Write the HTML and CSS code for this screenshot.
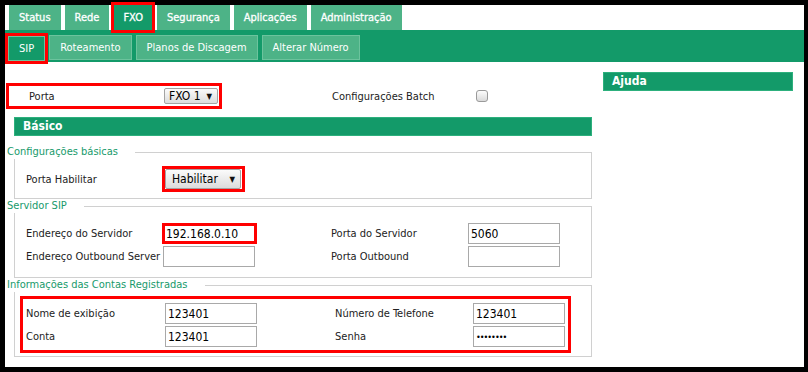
FILE: index.html
```html
<!DOCTYPE html>
<html lang="pt">
<head>
    <title>FXO - SIP</title>
    <meta charset="utf-8" />
    <link rel="stylesheet" href="styles.css">
</head>
<body>
<div class="frame">
    <div class="tabs">
        <a class="tab">Status</a>
        <a class="tab">Rede</a>
        <a class="tab on mark">FXO</a>
        <a class="tab">Segurança</a>
        <a class="tab">Aplicações</a>
        <a class="tab">Administração</a>
    </div>
    <div class="subbar">
        <a class="stab on mark">SIP</a>
        <a class="stab">Roteamento</a>
        <a class="stab">Planos de Discagem</a>
        <a class="stab">Alterar Número</a>
    </div>

    <div class="main">
        <div class="left">
            <div class="top">
                <div class="pbox">
                    <span class="plbl">Porta</span>
                    <span class="sel"><select class="s-fxo"><option>FXO 1</option></select></span>
                </div>
                <span class="blbl">Configurações Batch</span>
                <input class="chk" type="checkbox">
            </div>

            <div class="bar">Básico</div>

            <fieldset class="fs fs1">
                <legend>Configurações básicas</legend>
                <div class="row tall">
                    <span class="c1">Porta Habilitar</span>
                    <span class="redsel"><span class="sel"><select class="s-hab"><option>Habilitar</option></select></span></span>
                </div>
            </fieldset>

            <fieldset class="fs fs2">
                <legend>Servidor SIP</legend>
                <div class="row">
                    <span class="c1">Endereço do Servidor</span>
                    <span class="c2"><input class="inp red" type="text" value="192.168.0.10"></span>
                    <span class="c3">Porta do Servidor</span>
                    <input class="inp" type="text" value="5060">
                </div>
                <div class="row">
                    <span class="c1">Endereço Outbound Server</span>
                    <span class="c2"><input class="inp" type="text" value=""></span>
                    <span class="c3">Porta Outbound</span>
                    <input class="inp" type="text" value="">
                </div>
            </fieldset>

            <fieldset class="fs fs3">
                <legend>Informações das Contas Registradas</legend>
                <div class="acc">
                    <div class="row">
                        <span class="a1">Nome de exibição</span>
                        <span class="a2"><input class="inp" type="text" value="123401"></span>
                        <span class="a3">Número de Telefone</span>
                        <input class="inp" type="text" value="123401">
                    </div>
                    <div class="row">
                        <span class="a1">Conta</span>
                        <span class="a2"><input class="inp" type="text" value="123401"></span>
                        <span class="a3">Senha</span>
                        <input class="inp pwd" type="password" value="12345678">
                    </div>
                </div>
            </fieldset>
        </div>

        <div class="side">
            <div class="bar help">Ajuda</div>
        </div>
    </div>
</div>
</body>
</html>
```

FILE: styles.css
```css
body {
    margin: 0;
    background: #000;
    font-family: "DejaVu Sans Condensed", "DejaVu Sans", sans-serif;
    font-size: 11px;
    color: #222;
}

.frame {
    margin: 5px 4px 0 5px;
    height: 362px;
    background: #fff;
}

/* menu */
.tabs {
    display: flex;
    gap: 4px;
    padding-left: 4px;
    height: 25px;
}

.tab {
    display: flex;
    align-items: center;
    padding: 0 10px;
    background: #4db387;
    color: #fff;
    -webkit-text-stroke: 0.3px #fff;
}

.tab.on {
    background: #139a69;
    margin: 0 1px;
    padding: 0 9px;
}

.mark {
    outline: 3px solid #f00;
}

.subbar {
    display: flex;
    gap: 4px;
    height: 32px;
    box-sizing: border-box;
    padding: 5px 0 2px 3px;
    background: #139a69;
}

.stab {
    display: flex;
    align-items: center;
    padding: 0 10px;
    background: #4db387;
    border: 1px solid #6cc39d;
    color: #fff;
}

.stab.on {
    background: #139a69;
    margin-top: 1px;
    margin-bottom: -1px;
}

/* content */
.main {
    display: flex;
}

.left {
    width: 595px;
}

.side {
    width: 190px;
    margin: 10px 0 0 3px;
}

.top {
    display: flex;
    align-items: center;
    margin-top: 21px;
}

.pbox {
    display: flex;
    align-items: center;
    box-sizing: border-box;
    width: 216px;
    height: 26px;
    margin-left: 1px;
    padding-left: 20px;
    border: 3px solid #f00;
}

.plbl {
    width: 135px;
}

.blbl {
    width: 140px;
    margin-left: 110px;
}

.chk {
    appearance: none;
    -webkit-appearance: none;
    box-sizing: border-box;
    width: 12px;
    height: 12px;
    margin: 0 0 0 4px;
    border: 1px solid #9a9a9a;
    border-radius: 3px;
    background: linear-gradient(#fdfdfd, #dadada);
}

.bar {
    box-sizing: border-box;
    height: 19px;
    line-height: 17px;
    margin: 8px 0 0 9px;
    width: 578px;
    padding-left: 8px;
    background: #139a69;
    border: 1px solid #2db07d;
    color: #fff;
    font-weight: bold;
    font-size: 12px;
}

.bar.help {
    width: 190px;
    margin: 0;
}

/* selects */
.sel {
    position: relative;
    display: inline-block;
}

.sel::after {
    content: "▼";
    position: absolute;
    right: 6px;
    top: 50%;
    transform: translateY(-50%);
    font-size: 8px;
    color: #111;
    pointer-events: none;
}

.sel select {
    appearance: none;
    -webkit-appearance: none;
    display: block;
    box-sizing: border-box;
    font: inherit;
    color: #000;
    border: 1px solid #a3a3a3;
    border-radius: 2px;
    background: linear-gradient(#fbfbfb, #dcdcdc);
    padding: 0 0 0 4px;
}

.s-fxo {
    width: 54px;
    height: 16px;
    font-size: 12px !important;
    line-height: 14px;
}

.s-hab {
    width: 76px;
    height: 20px;
    font-size: 12px !important;
    padding-left: 6px !important;
}

.redsel {
    display: inline-block;
    border: 3px solid #f00;
    padding-right: 1px;
    margin-left: -1px;
}

/* fieldsets */
.fs {
    box-sizing: border-box;
    width: 578px;
    margin: 0 0 0 9px;
    padding: 0 0 0 11px;
    border: 1px solid #d0d0d0;
}

.fs legend {
    margin-left: -19px;
    padding: 0 17px 0 0;
    line-height: 14px;
    color: #179a6b;
    font-size: 11px;
}

.fs1 {
    margin-top: 9px;
    padding-top: 7px;
    padding-bottom: 6px;
}

.fs2 {
    padding-top: 9px;
    padding-bottom: 9px;
}

.fs3 {
    padding: 4px 0 3px 5px;
}

.fs3 legend {
    margin-left: -13px;
}

.row {
    display: flex;
    align-items: center;
    height: 23px;
}

.row.tall {
    height: 26px;
}

.c1 {
    width: 137px;
}

.c2 {
    width: 168px;
}

.c3 {
    width: 137px;
}

.acc {
    box-sizing: border-box;
    width: 551px;
    border: 3px solid #f00;
    padding: 3px 0 2px 3px;
}

.a1 {
    width: 139px;
}

.a2 {
    width: 170px;
}

.a3 {
    width: 138px;
}

.inp {
    box-sizing: border-box;
    width: 92px;
    height: 21px;
    margin: 0;
    padding: 0 2px;
    border: 1px solid #a9a9a9;
    font-family: "DejaVu Sans Condensed", "DejaVu Sans", sans-serif;
    font-size: 12px;
    color: #000;
}

.inp.red {
    width: 95px;
    height: 21px;
    margin-left: -1px;
    padding-left: 1px;
    border: 3px solid #f00;
}

.inp.pwd {
    font-size: 9px;
    letter-spacing: -1px;
}
```
